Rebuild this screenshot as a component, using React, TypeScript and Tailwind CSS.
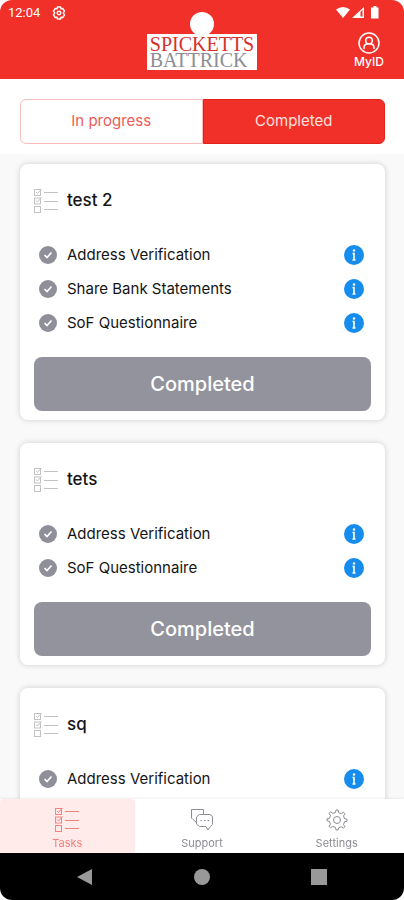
import React, { useState } from 'react';

type Tab = 'progress' | 'completed';

interface Task {
  id: number;
  title: string;
  steps: string[];
}

const TASKS: Task[] = [
  { id: 1, title: 'test 2', steps: ['Address Verification', 'Share Bank Statements', 'SoF Questionnaire'] },
  { id: 2, title: 'tets', steps: ['Address Verification', 'SoF Questionnaire'] },
  { id: 3, title: 'sq', steps: ['Address Verification'] },
];

const TasksIcon: React.FC<{ className?: string }> = ({ className }) => (
  <svg className={className} viewBox="0 0 24 24" fill="none" stroke="currentColor" strokeWidth={1} aria-hidden="true">
    <rect x="0.5" y="0.5" width="6" height="6" />
    <rect x="0.5" y="9" width="6" height="6" />
    <rect x="0.5" y="17.500" width="6" height="6" />
    <path d="M2 3l1.500 1.500L7.500 0M2 11.500l1.500 1.500L7.500 8.500" />
    <path d="M10 3.500h14M10 12.500h14M10 20.500h14" />
  </svg>
);

const SupportIcon: React.FC = () => (
  <svg className="size-6" viewBox="0 0 24 24" fill="none" stroke="currentColor" strokeWidth={1} strokeLinejoin="round" aria-hidden="true">
    <path d="M6.500 14.500L3 11.500 1.500 10V1.500h12V6" />
    <path d="M9.500 6.500h10.500l2.500 2v8l-2 2-2.500 3.500-2-3.500H9.500L6.500 16V9z" />
    <path d="M10.500 12.500h1.500M14 12.500h1.500M17.500 12.500h1.500" />
  </svg>
);

const SettingsIcon: React.FC = () => (
  <svg className="size-6" viewBox="0 0 24 24" fill="none" stroke="currentColor" strokeWidth={1} strokeLinejoin="round" aria-hidden="true">
    <path d="M10.500 4.500L11 2h2l.5 2.500 2.800 1.200 2.200-1.500 1.500 1.500-1.500 2.200 1.100 2.800 2.400.5v2l-2.400.5-1.100 2.800 1.500 2.200-1.500 1.500-2.200-1.500-2.800 1.200L13 22h-2l-.5-2.500-2.800-1.100-2.200 1.500L4 18.300l1.500-2.200-1.100-2.800L2 12.800v-2l2.400-.5 1.100-2.800L4 5.300l1.500-1.500 2.200 1.500z" />
    <circle cx="12" cy="12" r="3.500" />
  </svg>
);

const CheckBadge: React.FC = () => (
  <svg className="size-[18px]" viewBox="0 0 18 18" aria-hidden="true">
    <circle cx="9" cy="9" r="9" fill="#8e8f98" />
    <path d="M5.500 9l2.500 2.500 4.500-5" fill="none" stroke="#fff" strokeWidth={1.700} />
  </svg>
);

const InfoBadge: React.FC = () => (
  <svg className="size-5" viewBox="0 0 20 20" aria-hidden="true">
    <circle cx="10" cy="10" r="10" fill="#168cec" />
    <circle cx="10" cy="5.500" r="1.200" fill="#fff" />
    <path d="M8.500 8.500H10v6.500M8.500 15h3" fill="none" stroke="#fff" strokeWidth={1.600} />
  </svg>
);

const StatusBar: React.FC = () => (
  <div className="flex h-[26px] items-center justify-between pl-2 pr-6">
    <div className="flex items-center gap-3">
      <span className="font-['Roboto',sans-serif] text-[13px]">12:04</span>
      <svg className="size-[14px]" viewBox="0 0 14 14" fill="none" stroke="currentColor" aria-hidden="true">
        <path d="M5.500 1h3l.5 1.800 1.800-.3 1.700 2.500L11.300 7l1.200 2-1.700 2.500-1.800-.3-.5 1.800h-3L5 11.200l-1.800.3L1.500 9l1.200-2L1.500 5l1.700-2.500 1.800.3z" strokeWidth={1.400} />
        <circle cx="7" cy="7" r="1.800" strokeWidth={1.400} />
      </svg>
    </div>
    <svg className="h-[14px] w-11" viewBox="0 0 44 14" fill="currentColor" aria-hidden="true">
      <path d="M0 3.500Q7 -1.500 14 3.500L7 12z" />
      <path d="M28 1v11H16zM24.500 6v4.500H26.500V4z" fillRule="evenodd" />
      <path d="M37.500 0h3v1.500h2V12.500h-7.500V1.500h2.500z" />
    </svg>
  </div>
);

const Header: React.FC = () => (
  <header className="relative shrink-0 rounded-t-xl bg-[#f03029] pb-[9px] text-white">
    <StatusBar />
    {/* Camera cutout */}
    <div className="absolute left-1/2 top-3 size-6 -translate-x-1/2 rounded-full bg-white" />
    <div className="mt-[6px] grid grid-cols-[1fr_auto_1fr] items-end">
      <div className="relative col-start-2 flex h-9 flex-col justify-center bg-white px-[3px] font-['Liberation_Serif',serif] text-[20px] leading-4">
        <span className="text-[#d9302c]">SPICKETTS</span>
        <span className="text-[#8a8d92]">BATTRICK</span>
      </div>
      <button className="mr-5 flex flex-col items-center justify-self-end">
        <svg className="size-[22px]" viewBox="0 0 22 22" fill="none" stroke="currentColor" strokeWidth={1.500} aria-hidden="true">
          <circle cx="11" cy="11" r="10" />
          <circle cx="11" cy="8.500" r="3.300" />
          <path d="M6 17v-1.500q0-3.700 5-3.700t5 3.700V17" />
        </svg>
        <span className="text-xs font-medium">MyID</span>
      </button>
    </div>
  </header>
);

const TaskCard: React.FC<{ task: Task }> = ({ task }) => (
  <article className="rounded-lg bg-white px-[14px] pb-[9px] pt-5 shadow-[0_0_5px_1px_rgba(0,0,0,0.13)]">
    <div className="mb-5 flex h-[34px] items-center gap-[9px]">
      <TasksIcon className="size-6 text-[#c2c2c4]" />
      <h2 className="text-[17px] font-medium">{task.title}</h2>
    </div>
    <ul>
      {task.steps.map((step) => (
        <li key={step} className="flex h-[34px] items-center gap-[10px] pl-[5px] pr-[7px]">
          <CheckBadge />
          <span className="flex-1 text-[15px]">{step}</span>
          <button aria-label={`About ${step}`}>
            <InfoBadge />
          </button>
        </li>
      ))}
    </ul>
    <button className="mt-[17px] h-[54px] w-full rounded-lg bg-[#92939c] text-xl font-medium text-white">Completed</button>
  </article>
);

const NAV_ITEMS = [
  { label: 'Tasks', icon: <TasksIcon className="size-6" /> },
  { label: 'Support', icon: <SupportIcon /> },
  { label: 'Settings', icon: <SettingsIcon /> },
];

const App: React.FC = () => {
  const [tab, setTab] = useState<Tab>('completed');
  const [page, setPage] = useState('Tasks');

  const tabClass = (name: Tab) =>
    tab === name ? 'bg-[#f03029] border-[#e4201c] text-[#ffe1df]' : 'bg-white border-[#f9bcba] text-[#ee5b57]';

  return (
    <div className="flex h-screen flex-col overflow-hidden bg-white font-['Inter',sans-serif] text-[#151515]">
      <Header />

      <div className="flex shrink-0 bg-white pb-[10px] pl-5 pr-[19px] pt-5">
        <button
          onClick={() => setTab('progress')}
          className={`h-[45px] flex-1 rounded-l-md border text-[15px] ${tabClass('progress')}`}
        >
          In progress
        </button>
        <button
          onClick={() => setTab('completed')}
          className={`h-[45px] flex-1 rounded-r-md border text-[15px] ${tabClass('completed')}`}
        >
          Completed
        </button>
      </div>

      <main className="flex min-h-0 flex-1 flex-col gap-[23px] overflow-y-auto bg-[#f9f9f9] pb-5 pl-5 pr-[19px] pt-[10px] [scrollbar-width:none] *:shrink-0">
        {tab === 'completed' && TASKS.map((task) => <TaskCard key={task.id} task={task} />)}
      </main>

      <nav className="relative grid shrink-0 grid-cols-3 bg-white shadow-[0_0_3px_rgba(0,0,0,0.12)]">
        {NAV_ITEMS.map((item) => (
          <a
            key={item.label}
            href="#"
            onClick={() => setPage(item.label)}
            className={`flex h-[54px] flex-col items-center gap-[3px] pt-[9px] text-[11px] leading-4 ${
              page === item.label ? 'rounded-t bg-[#ffecea] text-[#f4827e]' : 'text-[#8c8d94]'
            }`}
          >
            {item.icon}
            {item.label}
          </a>
        ))}
      </nav>

      {/* Android system buttons */}
      <div className="flex h-[47px] shrink-0 items-center justify-between rounded-b-xl bg-black px-[77px] text-[#999]">
        <button aria-label="Back">
          <svg className="size-4" viewBox="0 0 16 16" fill="currentColor">
            <path d="M15 0v16L0 8z" />
          </svg>
        </button>
        <button aria-label="Home" className="size-4 rounded-full bg-[#999]" />
        <button aria-label="Recent apps" className="size-4 bg-[#999]" />
      </div>
    </div>
  );
};

export default App;
